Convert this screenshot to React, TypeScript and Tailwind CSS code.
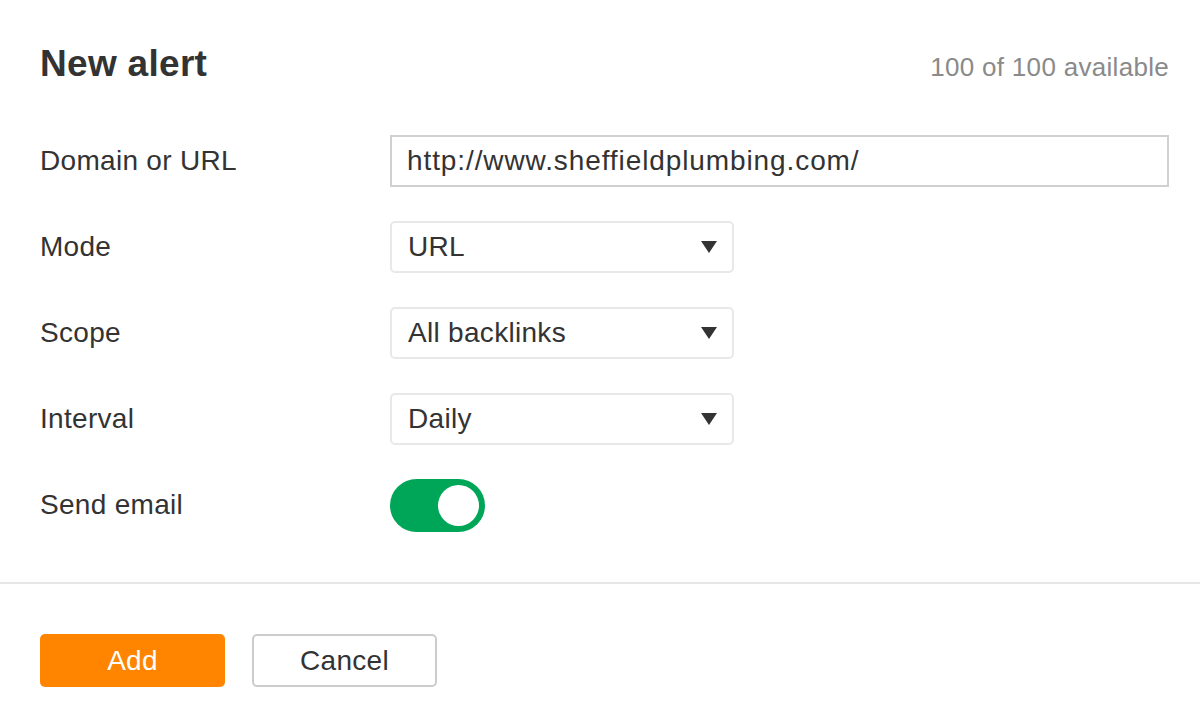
import React, { useState } from 'react';

const Caret = () => (
  <svg width="16" height="12" viewBox="0 0 16 12" className="shrink-0">
    <polygon points="0,0 16,0 8,12" fill="#333333" />
  </svg>
);

const SelectBox: React.FC<{ value: string }> = ({ value }) => (
  <div className="w-[344px] h-[52px] flex items-center justify-between pl-[16px] pr-[15px] border-2 border-[#e8e8e8] rounded-[5px] bg-white">
    <span className="text-[28px] tracking-[0.3px] text-[#333]">{value}</span>
    <Caret />
  </div>
);

const Row: React.FC<{ label: string; children: React.ReactNode }> = ({ label, children }) => (
  <div className="flex items-center h-[52px]">
    <div className="w-[350px] text-[28px] tracking-[0.3px] text-[#333]">{label}</div>
    <div className="flex-1">{children}</div>
  </div>
);

export default function App() {
  const [email, setEmail] = useState(true);

  return (
    <div className="w-[1200px] h-[719px] bg-white overflow-hidden" style={{ fontFamily: '"Liberation Sans", Arial, sans-serif' }}>
      <div className="pl-10 pr-[31px] pt-10">
        <div className="flex items-baseline justify-between">
          <h1 className="text-[37px] leading-[48px] font-bold tracking-[0.3px] text-[#333]">New alert</h1>
          <span className="text-[26px] tracking-[0.3px] text-[#8a8a8a]">100 of 100 available</span>
        </div>

        <div className="mt-[47px] flex flex-col gap-[34px]">
          <Row label="Domain or URL">
            <div className="h-[52px] flex items-center px-[15px] border-2 border-[#d0d0d0] bg-white">
              <span className="text-[28px] tracking-[0.9px] text-[#333]">http://www.sheffieldplumbing.com/</span>
            </div>
          </Row>
          <Row label="Mode">
            <SelectBox value="URL" />
          </Row>
          <Row label="Scope">
            <SelectBox value="All backlinks" />
          </Row>
          <Row label="Interval">
            <SelectBox value="Daily" />
          </Row>
          <Row label="Send email">
            <button
              onClick={() => setEmail(!email)}
              className={`w-[95px] h-[53px] rounded-full flex items-center px-[6px] ${email ? 'bg-[#00a658] justify-end' : 'bg-[#d5d5d5] justify-start'}`}
            >
              <span className="w-[41px] h-[41px] rounded-full bg-white block" />
            </button>
          </Row>
        </div>
      </div>

      <div className="mt-[51px] h-[2px] bg-[#e6e6e6]" />

      <div className="pl-10 pt-[50px] flex gap-[27px]">
        <button className="w-[185px] h-[53px] rounded-[5px] bg-[#ff8400] text-white text-[28px] tracking-[0.3px]">Add</button>
        <button className="w-[185px] h-[53px] rounded-[5px] border-2 border-[#cccccc] bg-white text-[#333] text-[28px] tracking-[0.3px]">Cancel</button>
      </div>
    </div>
  );
}
